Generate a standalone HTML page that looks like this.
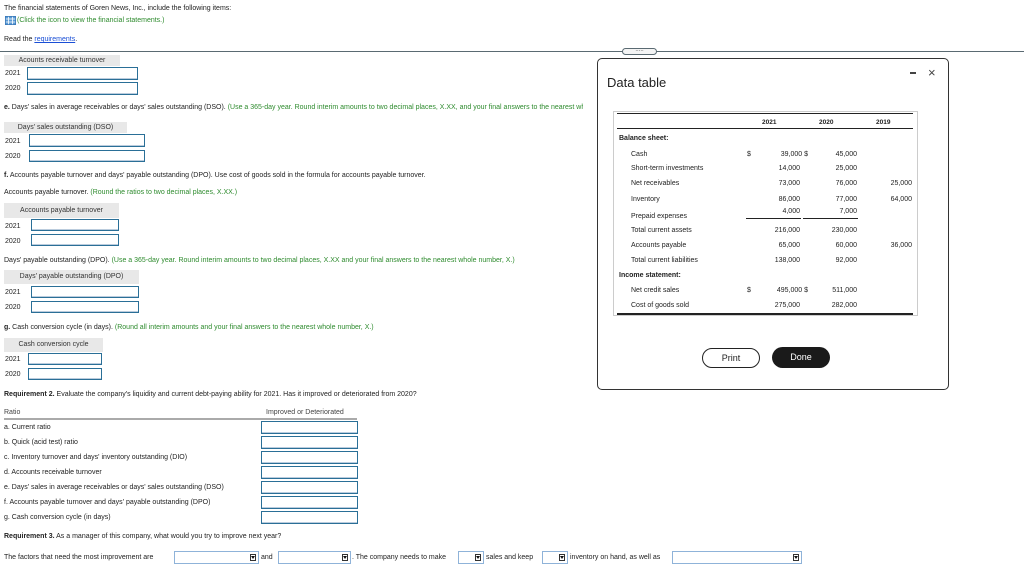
<!DOCTYPE html>
<html><head><meta charset="utf-8"><style>
body{margin:0;width:1024px;height:570px;position:relative;background:#fff;font-family:"Liberation Sans",Arial,sans-serif;font-size:7px;color:#222;overflow:hidden}
.a{position:absolute;white-space:nowrap;line-height:9px}
.g{color:#2e8b2e}
.in{position:absolute;border:1px solid #2a6f97;box-sizing:border-box;background:#fff;box-shadow:inset 0 -1px 0 #bcd}
.hd{position:absolute;background:#e8e8e8;text-align:center;line-height:11px;color:#333}
.sel{position:absolute;border:1px solid #8fb3d9;box-sizing:border-box;height:13px;background:#fff}
.sel i{position:absolute;right:2px;top:2px;width:6px;height:7px;border:1px solid #333;box-sizing:border-box}
.sel i:after{content:"";position:absolute;left:0;top:1px;border-left:2px solid transparent;border-right:2px solid transparent;border-top:3px solid #111}
.r{text-align:right}
</style></head><body>
<div class="a" style="left:4px;top:4px">The financial statements of Goren News, Inc., include the following items:</div>
<svg style="position:absolute;left:5px;top:16px" width="11" height="9" viewBox="0 0 11 9"><rect x="0" y="0" width="11" height="9" fill="#5b9bd5"/><path d="M3.5 0V9M7.5 0V9M0 3H11M0 6H11" stroke="#fff" stroke-width="0.8"/><rect x="0.4" y="0.4" width="10.2" height="8.2" fill="none" stroke="#3a78b8" stroke-width="0.8"/></svg>
<div class="a g" style="left:17px;top:16px">(Click the icon to view the financial statements.)</div>
<div class="a" style="left:4px;top:35px">Read the <span style="color:#1a4fd6;text-decoration:underline">requirements</span>.</div>
<div style="position:absolute;left:0;top:51px;width:1024px;height:1px;background:#5a6a72"></div>
<div style="position:absolute;left:622px;top:48px;width:35px;height:7px;border:1px solid #5a6a72;border-radius:4px;background:#f4f4f4;box-sizing:border-box;text-align:center;font-size:6px;line-height:3px;color:#555">.....</div>

<div class="hd" style="left:4px;top:55px;width:116px">Acounts receivable turnover</div>
<div class="a" style="left:5px;top:69px">2021</div><div class="in" style="left:27px;top:67px;width:111px;height:13px"></div>
<div class="a" style="left:5px;top:84px">2020</div><div class="in" style="left:27px;top:82px;width:111px;height:13px"></div>

<div class="a" style="left:4px;top:103px;width:579px;overflow:hidden"><b>e.</b> Days' sales in average receivables or days' sales outstanding (DSO). <span class="g">(Use a 365-day year. Round interim amounts to two decimal places, X.XX, and your final answers to the nearest whole number, X.)</span></div>
<div class="hd" style="left:4px;top:122px;width:123px">Days' sales outstanding (DSO)</div>
<div class="a" style="left:5px;top:137px">2021</div><div class="in" style="left:29px;top:134px;width:116px;height:13px"></div>
<div class="a" style="left:5px;top:152px">2020</div><div class="in" style="left:29px;top:150px;width:116px;height:12px"></div>

<div class="a" style="left:4px;top:171px"><b>f.</b> Accounts payable turnover and days' payable outstanding (DPO). Use cost of goods sold in the formula for accounts payable turnover.</div>
<div class="a" style="left:4px;top:188px">Accounts payable turnover. <span class="g">(Round the ratios to two decimal places, X.XX.)</span></div>
<div class="hd" style="left:4px;top:203px;width:115px;height:15px;line-height:15px">Accounts payable turnover</div>
<div class="a" style="left:5px;top:222px">2021</div><div class="in" style="left:31px;top:219px;width:88px;height:12px"></div>
<div class="a" style="left:5px;top:237px">2020</div><div class="in" style="left:31px;top:234px;width:88px;height:12px"></div>

<div class="a" style="left:4px;top:256px">Days' payable outstanding (DPO). <span class="g">(Use a 365-day year. Round interim amounts to two decimal places, X.XX and your final answers to the nearest whole number, X.)</span></div>
<div class="hd" style="left:4px;top:270px;width:135px;height:14px;line-height:14px">Days' payable outstanding (DPO)</div>
<div class="a" style="left:5px;top:288px">2021</div><div class="in" style="left:31px;top:286px;width:108px;height:12px"></div>
<div class="a" style="left:5px;top:303px">2020</div><div class="in" style="left:31px;top:301px;width:108px;height:12px"></div>

<div class="a" style="left:4px;top:323px"><b>g.</b> Cash conversion cycle (in days). <span class="g">(Round all interim amounts and your final answers to the nearest whole number, X.)</span></div>
<div class="hd" style="left:4px;top:338px;width:99px;height:14px;line-height:14px">Cash conversion cycle</div>
<div class="a" style="left:5px;top:355px">2021</div><div class="in" style="left:28px;top:353px;width:74px;height:12px"></div>
<div class="a" style="left:5px;top:370px">2020</div><div class="in" style="left:28px;top:368px;width:74px;height:12px"></div>

<div class="a" style="left:4px;top:390px"><b>Requirement 2.</b> Evaluate the company's liquidity and current debt-paying ability for 2021. Has it improved or deteriorated from 2020?</div>
<div class="a" style="left:4px;top:408px;color:#444">Ratio</div>
<div class="a" style="left:266px;top:408px;color:#444">Improved or Deteriorated</div>
<div style="position:absolute;left:4px;top:418px;width:353px;height:2px;background:#aaa"></div>
<div class="a" style="left:4px;top:423px">a. Current ratio</div><div class="in" style="left:261px;top:421px;width:97px;height:13px"></div>
<div class="a" style="left:4px;top:438px">b. Quick (acid test) ratio</div><div class="in" style="left:261px;top:436px;width:97px;height:13px"></div>
<div class="a" style="left:4px;top:453px">c. Inventory turnover and days' inventory outstanding (DIO)</div><div class="in" style="left:261px;top:451px;width:97px;height:13px"></div>
<div class="a" style="left:4px;top:468px">d. Accounts receivable turnover</div><div class="in" style="left:261px;top:466px;width:97px;height:13px"></div>
<div class="a" style="left:4px;top:483px">e. Days' sales in average receivables or days' sales outstanding (DSO)</div><div class="in" style="left:261px;top:481px;width:97px;height:13px"></div>
<div class="a" style="left:4px;top:498px">f. Accounts payable turnover and days' payable outstanding (DPO)</div><div class="in" style="left:261px;top:496px;width:97px;height:13px"></div>
<div class="a" style="left:4px;top:513px">g. Cash conversion cycle (in days)</div><div class="in" style="left:261px;top:511px;width:97px;height:13px"></div>

<div class="a" style="left:4px;top:532px"><b>Requirement 3.</b> As a manager of this company, what would you try to improve next year?</div>
<div class="a" style="left:4px;top:553px">The factors that need the most improvement are</div>
<div class="sel" style="left:174px;top:551px;width:85px"><i></i></div>
<div class="a" style="left:261px;top:553px">and</div>
<div class="sel" style="left:278px;top:551px;width:73px"><i></i></div>
<div class="a" style="left:352px;top:553px">. The company needs to make</div>
<div class="sel" style="left:458px;top:551px;width:26px"><i></i></div>
<div class="a" style="left:486px;top:553px">sales and keep</div>
<div class="sel" style="left:542px;top:551px;width:26px"><i></i></div>
<div class="a" style="left:570px;top:553px">inventory on hand, as well as</div>
<div class="sel" style="left:672px;top:551px;width:130px"><i></i></div>

<!-- modal -->
<div style="position:absolute;left:597px;top:58px;width:352px;height:332px;border:1px solid #333;border-radius:5px;box-sizing:border-box;background:#fff"></div>
<div class="a" style="left:607px;top:75px;font-size:13px;line-height:15px;color:#222">Data table</div>
<div style="position:absolute;left:910px;top:72px;width:6px;height:2px;background:#444"></div>
<div class="a" style="left:928px;top:66px;font-size:13px;line-height:14px;color:#444">×</div>
<div style="position:absolute;left:613px;top:111px;width:305px;height:205px;border:1px solid #ccc;box-sizing:border-box"></div>
<div style="position:absolute;left:617px;top:113px;width:296px;height:1px;background:#222"></div>
<div style="position:absolute;left:617px;top:128px;width:296px;height:1px;background:#222"></div>
<div style="position:absolute;left:617px;top:313px;width:296px;height:2px;background:#222"></div>
<div style="position:absolute;left:746px;top:218px;width:55px;height:1px;background:#222"></div>
<div style="position:absolute;left:803px;top:218px;width:55px;height:1px;background:#222"></div>
<div class="a" style="left:762px;top:118px;font-weight:bold;font-size:6.5px">2021</div>
<div class="a" style="left:819px;top:118px;font-weight:bold;font-size:6.5px">2020</div>
<div class="a" style="left:876px;top:118px;font-weight:bold;font-size:6.5px">2019</div>
<div class="a" style="left:619px;top:134px;font-weight:bold">Balance sheet:</div>
<div class="a" style="left:631px;top:150px">Cash</div>
<div class="a" style="left:631px;top:164px">Short-term investments</div>
<div class="a" style="left:631px;top:179px">Net receivables</div>
<div class="a" style="left:631px;top:195px">Inventory</div>
<div class="a" style="left:631px;top:212px">Prepaid expenses</div>
<div class="a" style="left:631px;top:226px">Total current assets</div>
<div class="a" style="left:631px;top:241px">Accounts payable</div>
<div class="a" style="left:631px;top:256px">Total current liabilities</div>
<div class="a" style="left:619px;top:271px;font-weight:bold">Income statement:</div>
<div class="a" style="left:631px;top:286px">Net credit sales</div>
<div class="a" style="left:631px;top:301px">Cost of goods sold</div>
<div class="a" style="left:747px;top:150px">$</div>
<div class="a" style="left:747px;top:286px">$</div>
<div class="a r" style="left:760px;top:150px;width:48px">39,000 $</div>
<div class="a r" style="left:760px;top:164px;width:40px">14,000</div>
<div class="a r" style="left:760px;top:179px;width:40px">73,000</div>
<div class="a r" style="left:760px;top:195px;width:40px">86,000</div>
<div class="a r" style="left:760px;top:207px;width:40px">4,000</div>
<div class="a r" style="left:760px;top:226px;width:40px">216,000</div>
<div class="a r" style="left:760px;top:241px;width:40px">65,000</div>
<div class="a r" style="left:760px;top:256px;width:40px">138,000</div>
<div class="a r" style="left:760px;top:286px;width:48px">495,000 $</div>
<div class="a r" style="left:760px;top:301px;width:40px">275,000</div>
<div class="a r" style="left:817px;top:150px;width:40px">45,000</div>
<div class="a r" style="left:817px;top:164px;width:40px">25,000</div>
<div class="a r" style="left:817px;top:179px;width:40px">76,000</div>
<div class="a r" style="left:817px;top:195px;width:40px">77,000</div>
<div class="a r" style="left:817px;top:207px;width:40px">7,000</div>
<div class="a r" style="left:817px;top:226px;width:40px">230,000</div>
<div class="a r" style="left:817px;top:241px;width:40px">60,000</div>
<div class="a r" style="left:817px;top:256px;width:40px">92,000</div>
<div class="a r" style="left:817px;top:286px;width:40px">511,000</div>
<div class="a r" style="left:817px;top:301px;width:40px">282,000</div>
<div class="a r" style="left:872px;top:179px;width:40px">25,000</div>
<div class="a r" style="left:872px;top:195px;width:40px">64,000</div>
<div class="a r" style="left:872px;top:241px;width:40px">36,000</div>
<div style="position:absolute;left:702px;top:348px;width:58px;height:20px;border:1px solid #222;border-radius:10px;box-sizing:border-box;text-align:center;line-height:18px;font-size:9px">Print</div>
<div style="position:absolute;left:772px;top:347px;width:58px;height:21px;background:#1a1a1a;border-radius:11px;color:#fff;text-align:center;line-height:21px;font-size:9px">Done</div>
</body></html>
